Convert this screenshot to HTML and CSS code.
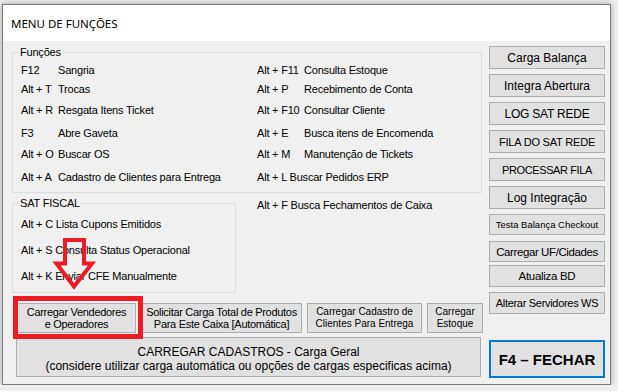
FILE: index.html
```html
<!DOCTYPE html>
<html lang="pt-BR">
<head>
    <meta charset="UTF-8">
    <title>Menu de Funções</title>
    <link rel="stylesheet" href="styles.css">
</head>
<body>
    <div class="window">
        <div class="title-bar">MENU DE FUNÇÕES</div>

        <div class="window-body">
            <div class="main-col">
                <!-- Atalhos gerais -->
                <fieldset class="group group-funcoes">
                    <legend>Funções</legend>
                    <div class="shortcut-grid">
                        <div class="shortcut"><span class="key">F12</span>Sangria</div>
                        <div class="shortcut"><span class="key key-wide">Alt + F11</span>Consulta Estoque</div>
                        <div class="shortcut"><span class="key">Alt + T</span>Trocas</div>
                        <div class="shortcut"><span class="key key-wide">Alt + P</span>Recebimento de Conta</div>
                        <div class="shortcut"><span class="key">Alt + R</span>Resgata Itens Ticket</div>
                        <div class="shortcut"><span class="key key-wide">Alt + F10</span>Consultar Cliente</div>
                        <div class="shortcut"><span class="key">F3</span>Abre Gaveta</div>
                        <div class="shortcut"><span class="key key-wide">Alt + E</span>Busca itens de Encomenda</div>
                        <div class="shortcut"><span class="key">Alt + O</span>Buscar OS</div>
                        <div class="shortcut"><span class="key key-wide">Alt + M</span>Manutenção de Tickets</div>
                        <div class="shortcut"><span class="key">Alt + A</span>Cadastro de Clientes para Entrega</div>
                        <div class="shortcut">Alt + L Buscar Pedidos ERP</div>
                    </div>
                </fieldset>

                <div class="middle-row">
                    <fieldset class="group group-sat">
                        <legend>SAT FISCAL</legend>
                        <div class="shortcut">Alt + C Lista Cupons Emitidos</div>
                        <div class="shortcut">Alt + S Consulta Status Operacional</div>
                        <div class="shortcut">Alt + K Enviar CFE Manualmente</div>
                    </fieldset>
                    <div class="shortcut loose">Alt + F Busca Fechamentos de Caixa</div>
                </div>

                <!-- Cargas -->
                <div class="load-row">
                    <button class="btn btn-load btn-vendedores">Carregar Vendedores<br>e Operadores</button>
                    <button class="btn btn-load btn-solicitar">Solicitar Carga Total de Produtos<br>Para Este Caixa [Automática]</button>
                    <button class="btn btn-load btn-small btn-clientes">Carregar Cadastro de<br>Clientes Para Entrega</button>
                    <button class="btn btn-load btn-small btn-estoque">Carregar<br>Estoque</button>
                </div>
                <button class="btn btn-geral">CARREGAR CADASTROS - Carga Geral<br>(considere utilizar carga automática ou opções de cargas especificas acima)</button>
            </div>

            <div class="side-col">
                <button class="btn btn-side">Carga Balança</button>
                <button class="btn btn-side">Integra Abertura</button>
                <button class="btn btn-side btn-log">LOG SAT REDE</button>
                <button class="btn btn-side btn-fila">FILA DO SAT REDE</button>
                <button class="btn btn-side btn-processar">PROCESSAR FILA</button>
                <button class="btn btn-side">Log Integração</button>
                <button class="btn btn-side btn-testa">Testa Balança Checkout</button>
                <button class="btn btn-side btn-uf">Carregar UF/Cidades</button>
                <button class="btn btn-side btn-bd">Atualiza BD</button>
                <button class="btn btn-side btn-ws">Alterar Servidores WS</button>
                <button class="btn btn-close">F4 – FECHAR</button>
            </div>
        </div>

        <!-- marcações em vermelho por cima da janela -->
        <div class="highlight-box"></div>
        <svg class="highlight-arrow" width="50" height="60" viewBox="0 0 50 60">
            <polygon points="15,5 34,5 34,28.5 42,28.5 24,51.5 6.5,28.5 15,28.5" fill="none" stroke="#ed1c24" stroke-width="4"/>
        </svg>
    </div>
</body>
</html>
```

FILE: styles.css
```css
body {
    margin: 0;
    padding: 4px 0 0 2px;
    background-color: #efefef;
    font-family: "Liberation Sans", Arial, sans-serif;
    color: #000;
}

/* Janela */
.window {
    position: relative;
    width: 609px;
    height: 381px;
    box-sizing: border-box;
    border: 1px solid #7a7a7a;
    background-color: #f0f0f0;
    box-shadow: 0 0 6px rgba(0, 0, 0, 0.35);
    display: flex;
    flex-direction: column;
}

.title-bar {
    height: 36px;
    flex: none;
    display: flex;
    align-items: center;
    padding-left: 8px;
    background-color: #fff;
    font-family: "Noto Sans", sans-serif;
    font-size: 11.5px;
}

.window-body {
    flex: 1;
    display: flex;
    gap: 6px;
    padding: 5px 5px 6px 9px;
}

.main-col {
    width: 471px;
    display: flex;
    flex-direction: column;
    align-items: flex-start;
}

.side-col {
    width: 116px;
    display: flex;
    flex-direction: column;
    gap: 5px;
}

/* Group boxes */
.group {
    margin: 0;
    padding: 3px 8px 1px;
    border: 1px solid #dcdcdc;
    box-sizing: border-box;
    min-width: 0;
}

.group legend {
    padding: 0 1px;
    margin-left: -2px;
    font-size: 11px;
    line-height: 12px;
    letter-spacing: -0.2px;
}

.group-funcoes {
    width: 470px;
}

.shortcut-grid {
    display: grid;
    grid-template-columns: 236px 1fr;
    grid-template-rows: 18px 20px 22px 24px 18px 28px;
}

.shortcut {
    display: flex;
    align-items: center;
    font-size: 11px;
    letter-spacing: -0.2px;
    white-space: nowrap;
}

.key {
    flex: none;
    width: 37px;
}

.key-wide {
    width: 47px;
}

.middle-row {
    display: flex;
    align-items: flex-start;
    margin-top: 4px;
}

.group-sat {
    width: 224px;
    padding: 2px 8px 3px;
}

.group-sat .shortcut {
    height: 26px;
}

.shortcut.loose {
    margin-left: 21px;
    line-height: 16px;
}

/* Botões */
.btn {
    margin: 0;
    padding: 0;
    box-sizing: border-box;
    border: 1px solid #adadad;
    background-color: #e1e1e1;
    color: #000;
    font-family: "Liberation Sans", Arial, sans-serif;
}

.load-row {
    display: flex;
    gap: 5px;
    margin: 10px 0 0 5px;
}

.btn-load {
    height: 30px;
    font-size: 11px;
    line-height: 12px;
    letter-spacing: -0.3px;
}

.btn-small {
    font-size: 10px;
    letter-spacing: 0;
}

.btn-vendedores { width: 119px; }
.btn-solicitar { width: 161px; }
.btn-clientes { width: 115px; }
.btn-estoque { width: 56px; }

.btn-geral {
    width: 465px;
    height: 40px;
    margin: 4px 0 0 4px;
    padding-top: 3px;
    font-size: 12px;
    line-height: 14px;
}

.btn-side {
    height: 23px;
    flex: none;
    font-size: 12px;
}

.btn-log { letter-spacing: -0.2px; }
.btn-fila { font-size: 11px; letter-spacing: -0.2px; }
.btn-processar { font-size: 11px; letter-spacing: -0.4px; }
.btn-testa { height: 21px; font-size: 9.5px; }
.btn-uf { height: 21px; margin-top: 1px; font-size: 11.5px; letter-spacing: -0.4px; }
.btn-bd { height: 22px; margin-top: -2px; font-size: 11.5px; letter-spacing: -0.3px; }
.btn-ws { height: 22px; font-size: 11px; letter-spacing: -0.3px; }

.btn-close {
    margin-top: auto;
    height: 38px;
    flex: none;
    border: 2px solid #0078d7;
    font-size: 15px;
    font-weight: bold;
}

/* Marcações vermelhas */
.highlight-box {
    position: absolute;
    left: 10px;
    top: 291px;
    width: 130px;
    height: 43px;
    box-sizing: border-box;
    border: 5px solid #ed1c24;
    pointer-events: none;
}

.highlight-arrow {
    position: absolute;
    left: 47px;
    top: 230px;
    pointer-events: none;
}
```
